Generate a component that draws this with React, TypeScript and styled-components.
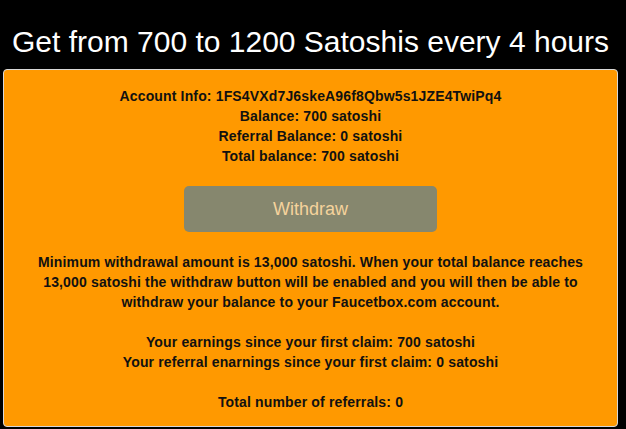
import React from 'react'
import styled, { createGlobalStyle } from 'styled-components'

const GlobalStyle = createGlobalStyle`
  html, body {
    margin: 0;
    padding: 0;
    background: #000;
  }

  body {
    font-family: "Liberation Sans", Arial, sans-serif;
  }
`

const Page = styled.div`
  width: 621px;
  height: 429px;
  overflow: hidden;
  background: #000;
`

const Title = styled.h1`
  margin: 0;
  padding: 24px 0 9px;
  color: #fff;
  font-weight: normal;
  font-size: 30px;
  line-height: 36px;
  text-align: center;
  white-space: nowrap;
`

const Panel = styled.div`
  margin-left: 3px;
  width: 615px;
  box-sizing: border-box;
  padding: 16px 10px 14px;
  background: #ff9900;
  border: 1px solid #d8d8d8;
  border-radius: 4px;
  color: #111;
  font-weight: bold;
  font-size: 14px;
  letter-spacing: 0.15px;
  line-height: 20px;
  text-align: center;
`

const InfoLine = styled.div``

const ButtonRow = styled.div`
  display: flex;
  justify-content: center;
  padding: 20px 0;
`

const WithdrawButton = styled.button`
  width: 253px;
  height: 46px;
  border: none;
  border-radius: 5px;
  background: #86876e;
  color: #f5d39c;
  font-family: "Liberation Sans", Arial, sans-serif;
  font-size: 18px;
  font-weight: normal;
  cursor: not-allowed;
`

const Note = styled.p`
  margin: 0;
  padding: 0 20px;
`

const Spacer = styled.div`
  height: 20px;
`

export default function App() {
  return (
    <Page>
      <GlobalStyle />
      <Title>Get from 700 to 1200 Satoshis every 4 hours</Title>
      <Panel>
        <InfoLine>Account Info: 1FS4VXd7J6skeA96f8Qbw5s1JZE4TwiPq4</InfoLine>
        <InfoLine>Balance: 700 satoshi</InfoLine>
        <InfoLine>Referral Balance: 0 satoshi</InfoLine>
        <InfoLine>Total balance: 700 satoshi</InfoLine>
        <ButtonRow>
          <WithdrawButton disabled>Withdraw</WithdrawButton>
        </ButtonRow>
        <Note>
          Minimum withdrawal amount is 13,000 satoshi. When your total balance reaches
          13,000 satoshi the withdraw button will be enabled and you will then be able to
          withdraw your balance to your Faucetbox.com account.
        </Note>
        <Spacer />
        <InfoLine>Your earnings since your first claim: 700 satoshi</InfoLine>
        <InfoLine>Your referral enarnings since your first claim: 0 satoshi</InfoLine>
        <Spacer />
        <InfoLine>Total number of referrals: 0</InfoLine>
      </Panel>
    </Page>
  )
}
